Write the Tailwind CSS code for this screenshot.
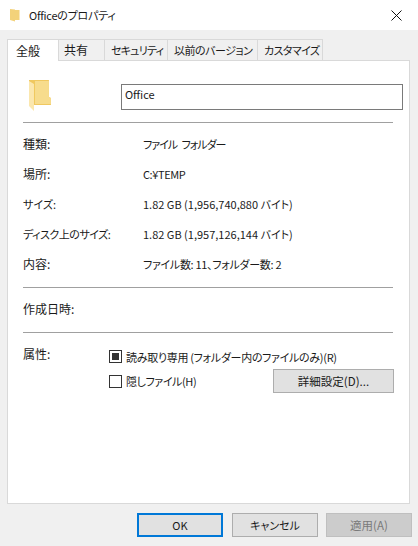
<!DOCTYPE html>
<html lang="ja">
<head>
    <meta charset="UTF-8">
    <title>Officeのプロパティ</title>
    <script src="https://cdn.jsdelivr.net/npm/@tailwindcss/browser@4"></script>
</head>
<body class="w-[418px] h-[546px] overflow-hidden bg-[#f0f0f0] text-[11px] leading-[16px] text-[#1a1a1a] [font-feature-settings:'palt'] font-['Noto_Sans_CJK_JP','Noto_Sans',sans-serif]">
    <!-- title bar -->
    <div class="h-[30px] bg-white flex items-center pl-[10px]">
        <svg class="w-[10px] h-[14px]" viewBox="0 0 10 14"><path d="M0 1l5 .5V2h4.5v10H5v1.5L0 12z" fill="#f3d27a"/></svg>
        <span class="ml-[9px] whitespace-nowrap tracking-[-0.25px]">Officeのプロパティ</span>
        <svg class="ml-auto mr-[16px] w-[11px] h-[11px]" viewBox="0 0 11 11" fill="none" stroke="#111" stroke-width="1"><path d="M.5.5l10 10M10.5.5l-10 10"/></svg>
    </div>

    <!-- tabs -->
    <div class="flex items-end h-[30px] pl-[7px] whitespace-nowrap">
        <div class="w-[52px] h-[22px] pl-[8px] text-[12px] bg-white border border-b-0 border-[#d9d9d9] flex items-center relative z-10 -mb-px">全般</div>
        <div class="w-[46px] h-[21px] pl-[5px] text-[12px] border border-l-0 border-b-0 border-[#d9d9d9] flex items-center">共有</div>
        <div class="w-[63px] h-[21px] pl-[6px] tracking-[-0.8px] border border-l-0 border-b-0 border-[#d9d9d9] flex items-center">セキュリティ</div>
        <div class="w-[90px] h-[21px] pl-[6px] tracking-[-0.5px] border border-l-0 border-b-0 border-[#d9d9d9] flex items-center">以前のバージョン</div>
        <div class="w-[65px] h-[21px] pl-[6px] tracking-[-0.6px] border border-l-0 border-b-0 border-[#d9d9d9] flex items-center">カスタマイズ</div>
    </div>

    <!-- panel -->
    <div class="ml-[7px] w-[403px] h-[444px] bg-white border border-[#d9d9d9] pl-[15px] pr-[15px] pt-[18px]">
        <div class="flex items-center h-[34px] -mr-[9px]">
            <svg class="ml-[6px] w-[22px] h-[32px]" viewBox="0 0 22 32">
                <path d="M0 0h20v17l2 1v7H0z" fill="#f0c860"/>
                <path d="M6 1h14v16l2 1v6H6z" fill="#f7dc8d"/>
                <path d="M0 1l5 3v27l-5-5z" fill="#fbe7ae"/>
            </svg>
            <div class="ml-[70px] w-[283px] h-[26px] border border-[#7a7a7a] flex items-center pl-[3px] pb-[6px] mt-[1px]">Office</div>
        </div>

        <div class="h-px w-[370px] bg-[#a0a0a0] mt-[9px]"></div>

        <div class="flex flex-col pt-[6px] w-[370px] whitespace-nowrap">
            <div class="flex h-[30px] items-center"><span class="w-[120px] text-[12px]">種類:</span><span class="tracking-[-1px] [word-spacing:3px]">ファイル フォルダー</span></div>
            <div class="flex h-[30px] items-center"><span class="w-[120px] text-[12px]">場所:</span><span class="tracking-[-0.4px]">C:¥TEMP</span></div>
            <div class="flex h-[30px] items-center"><span class="w-[120px]">サイズ:</span><span>1.82 GB (1,956,740,880 バイト)</span></div>
            <div class="flex h-[30px] items-center"><span class="w-[120px] tracking-[-0.5px]">ディスク上のサイズ:</span><span>1.82 GB (1,957,126,144 バイト)</span></div>
            <div class="flex h-[30px] items-center"><span class="w-[120px] text-[12px]">内容:</span><span class="tracking-[-0.3px]">ファイル数: 11、フォルダー数: 2</span></div>
        </div>

        <div class="h-px w-[370px] bg-[#a0a0a0] mt-[8px]"></div>
        <div class="h-[44px] pb-[2px] flex items-center w-[370px] text-[12px]">作成日時:</div>
        <div class="h-px w-[370px] bg-[#a0a0a0]"></div>

        <div class="flex w-[370px] pt-[14px] whitespace-nowrap">
            <span class="w-[86px] text-[12px] -mt-px">属性:</span>
            <div class="flex-1">
                <div class="flex items-center h-[17px] mt-px">
                    <span class="w-[13px] h-[13px] border border-[#333] flex items-center justify-center"><span class="w-[7px] h-[7px] bg-[#333]"></span></span>
                    <span class="ml-[4px] tracking-[-0.3px]">読み取り専用 (フォルダー内のファイルのみ)(R)</span>
                </div>
                <div class="flex items-center mt-[4px] h-[24px]">
                    <span class="w-[13px] h-[13px] border border-[#333]"></span>
                    <span class="ml-[4px] tracking-[-0.4px]">隠しファイル(H)</span>
                    <div class="ml-auto -mr-px w-[121px] h-[24px] text-[11.5px] bg-[#e1e1e1] border border-[#adadad] flex items-center justify-center">詳細設定(D)...</div>
                </div>
            </div>
        </div>
    </div>

    <!-- dialog buttons -->
    <div class="flex justify-end pt-[9px] pr-[6px]">
        <div class="w-[86px] h-[24px] bg-[#e1e1e1] border-2 border-[#0078d7] flex items-center justify-center">OK</div>
        <div class="ml-[9px] w-[86px] h-[24px] bg-[#e1e1e1] border border-[#adadad] flex items-center justify-center">キャンセル</div>
        <div class="ml-[8px] w-[86px] h-[24px] text-[11.5px] bg-[#cccccc] border border-[#bfbfbf] text-[#7a7a7a] flex items-center justify-center">適用(A)</div>
    </div>
</body>
</html>
